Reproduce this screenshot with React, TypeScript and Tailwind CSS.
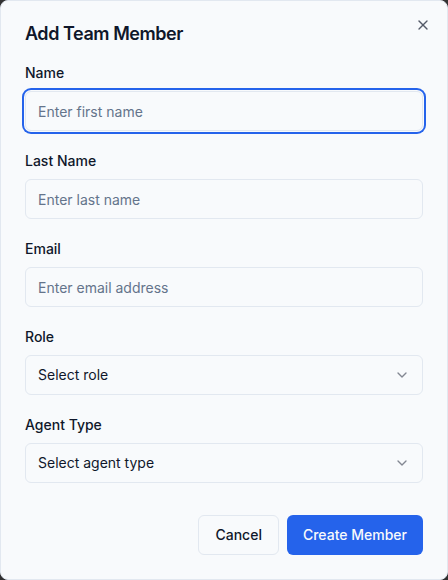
import React from "react";

const font = { fontFamily: "Inter, 'Noto Sans', sans-serif" };

function Chevron() {
  return (
    <svg width="16" height="16" viewBox="0 0 24 24" fill="none" stroke="currentColor" strokeWidth="2" strokeLinecap="round" strokeLinejoin="round" className="opacity-50">
      <path d="m6 9 6 6 6-6" />
    </svg>
  );
}

function Field({ label, children }: { label: string; children: React.ReactNode }) {
  return (
    <div className="flex flex-col gap-2">
      <label className="text-sm font-medium leading-5 text-[#0f172a]">{label}</label>
      {children}
    </div>
  );
}

function TextInput({ placeholder, focused }: { placeholder: string; focused?: boolean }) {
  return (
    <input
      placeholder={placeholder}
      className={
        focused
          ? "h-10 w-full rounded-md border border-[#e2e8f0] bg-[#f8fafc] px-3 text-sm text-[#0f172a] placeholder:text-[#64748b] outline-none ring-2 ring-[#2563eb] ring-offset-1 ring-offset-[#f8fafc]"
          : "h-10 w-full rounded-md border border-[#e2e8f0] bg-[#f8fafc] px-3 text-sm text-[#0f172a] placeholder:text-[#64748b] outline-none"
      }
      style={font}
    />
  );
}

function SelectBox({ text }: { text: string }) {
  return (
    <div className="flex h-10 w-full items-center justify-between rounded-md border border-[#e2e8f0] bg-[#f8fafc] px-3 text-sm text-[#0f172a]">
      <span>{text}</span>
      <Chevron />
    </div>
  );
}

export default function App() {
  return (
    <div className="h-[580px] w-[448px] bg-[#333333]" style={font}>
      <div className="relative flex h-full w-full flex-col gap-5 rounded-lg border border-[#e2e8f0] bg-[#f8fafc] p-6 shadow-lg">
        <h2 className="text-lg font-semibold leading-[18px] tracking-tight text-[#0f172a]">Add Team Member</h2>
        <button className="absolute right-4 top-4 text-[#0f172a] opacity-70">
          <svg width="16" height="16" viewBox="0 0 24 24" fill="none" stroke="currentColor" strokeWidth="2" strokeLinecap="round" strokeLinejoin="round">
            <path d="M18 6 6 18" />
            <path d="m6 6 12 12" />
          </svg>
        </button>
        <Field label="Name">
          <TextInput placeholder="Enter first name" focused />
        </Field>
        <Field label="Last Name">
          <TextInput placeholder="Enter last name" />
        </Field>
        <Field label="Email">
          <TextInput placeholder="Enter email address" />
        </Field>
        <Field label="Role">
          <SelectBox text="Select role" />
        </Field>
        <Field label="Agent Type">
          <SelectBox text="Select agent type" />
        </Field>
        <div className="mt-3 flex justify-end gap-2">
          <button className="h-10 rounded-md border border-[#e2e8f0] bg-[#f8fafc] px-4 text-sm font-medium text-[#0f172a]">Cancel</button>
          <button className="h-10 rounded-md bg-[#2563eb] px-4 text-sm font-medium text-[#f8fafc]">Create Member</button>
        </div>
      </div>
    </div>
  );
}
